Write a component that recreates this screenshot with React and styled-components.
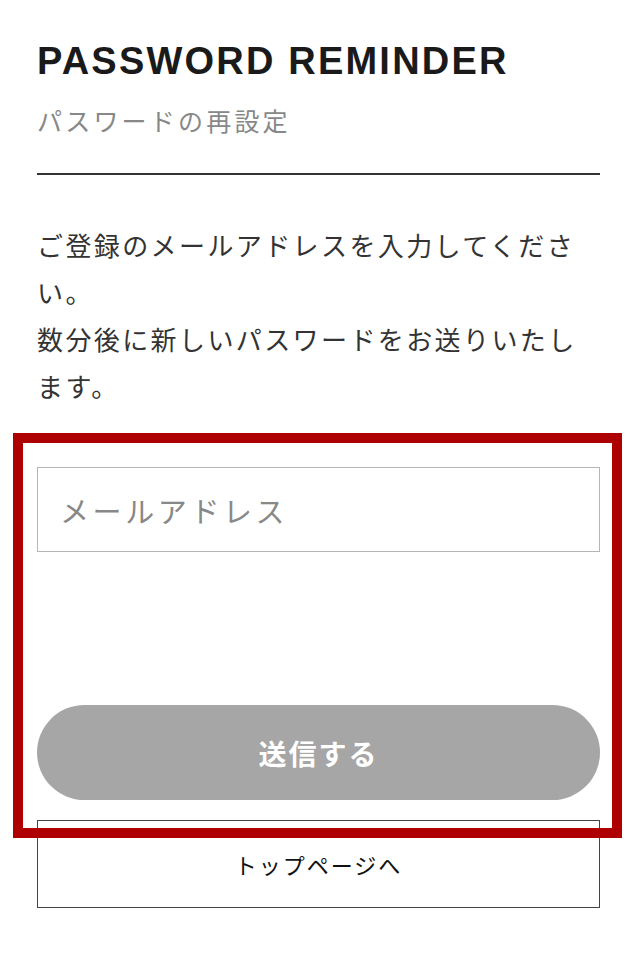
import React from "react";
import styled, { createGlobalStyle } from "styled-components";

const GlobalStyle = createGlobalStyle`
  body {
    margin: 0;
    background: #fff;
    font-family: "Noto Sans CJK JP", "Noto Sans", sans-serif;
  }
`;

const Page = styled.div`
  position: relative;
  padding: 42px 38px 40px 37px;
`;

const Title = styled.h1`
  margin: 0;
  font-family: "Liberation Sans", Arial, sans-serif;
  font-weight: 700;
  font-size: 38px;
  line-height: 39px;
  letter-spacing: 2.2px;
  color: #1a1a1a;
`;

const SubTitle = styled.p`
  margin: 27px 0 0;
  font-size: 25px;
  line-height: 25px;
  letter-spacing: 3.2px;
  color: #888;
`;

const Rule = styled.hr`
  margin: 40px 0 0;
  border: 0;
  height: 2px;
  background: #333;
`;

const Lead = styled.p`
  margin: 46px 0 0;
  font-size: 26px;
  line-height: 47px;
  letter-spacing: 2.4px;
  color: #333;
`;

const Form = styled.form`
  display: flex;
  flex-direction: column;
  margin-top: 58px;
`;

const EmailInput = styled.input`
  box-sizing: border-box;
  width: 100%;
  height: 85px;
  padding: 0 22px;
  border: 1px solid #b5b5b5;
  border-radius: 0;
  font-family: "Noto Sans CJK JP", sans-serif;
  font-size: 29px;
  letter-spacing: 3.6px;
  color: #333;
  outline: none;

  &::placeholder {
    color: #888;
  }
`;

const SubmitButton = styled.button`
  margin-top: 153px;
  height: 95px;
  border: 0;
  border-radius: 48px;
  background: #a6a6a6;
  color: #fff;
  font-family: "Noto Sans CJK JP", sans-serif;
  font-weight: 700;
  font-size: 28px;
  letter-spacing: 2px;
`;

const TopLink = styled.a`
  box-sizing: border-box;
  display: flex;
  align-items: center;
  justify-content: center;
  margin-top: 20px;
  height: 88px;
  border: 1px solid #444;
  font-size: 22px;
  letter-spacing: 2px;
  color: #111;
  text-decoration: none;
`;

const Highlight = styled.div`
  position: absolute;
  left: 13px;
  top: 433px;
  width: 609px;
  height: 405px;
  box-sizing: border-box;
  border: 10px solid #ae0000;
  pointer-events: none;
`;

export default function App() {
  return (
    <>
      <GlobalStyle />
      <Page>
        <Title>PASSWORD REMINDER</Title>
        <SubTitle>パスワードの再設定</SubTitle>
        <Rule />
        <Lead>
          ご登録のメールアドレスを入力してください。
          <br />
          数分後に新しいパスワードをお送りいたします。
        </Lead>
        <Form onSubmit={(e) => e.preventDefault()}>
          <EmailInput type="email" placeholder="メールアドレス" />
          <SubmitButton type="submit">送信する</SubmitButton>
        </Form>
        <TopLink href="#">トップページへ</TopLink>
        <Highlight />
      </Page>
    </>
  );
}
